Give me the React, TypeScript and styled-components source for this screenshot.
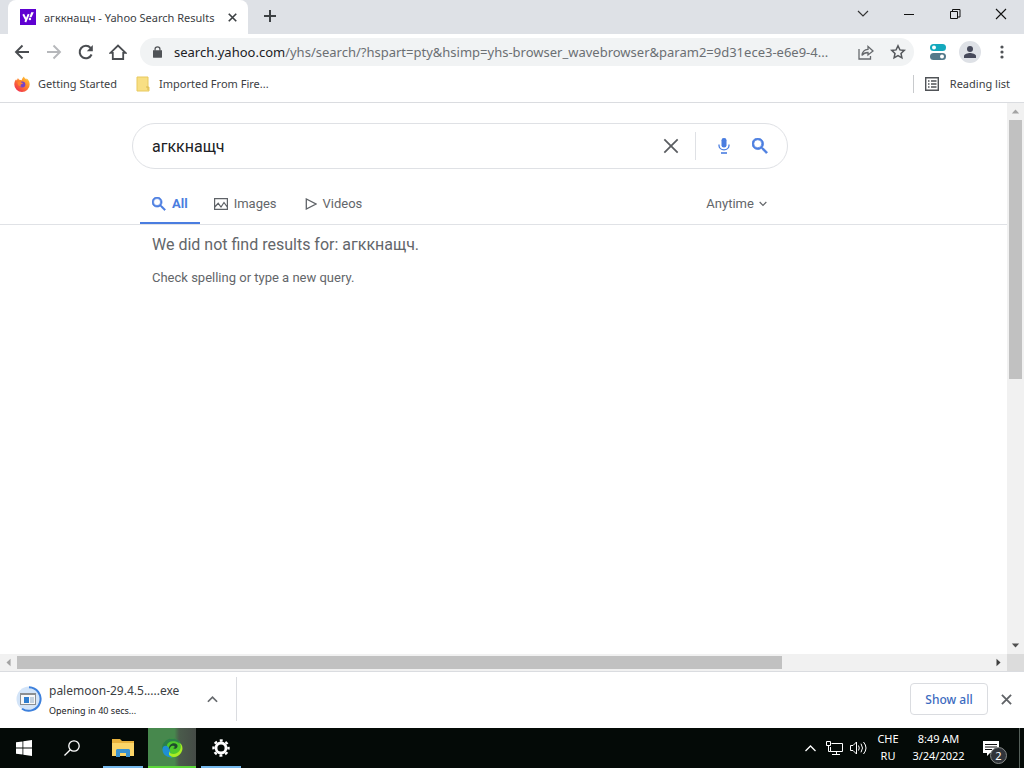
import React from "react";
import styled, { createGlobalStyle } from "styled-components";

const ui = `"Noto Sans", "Open Sans", sans-serif`;
const web = `Roboto, "Liberation Sans", sans-serif`;

const Global = createGlobalStyle`
  *, *::before, *::after { box-sizing: border-box; }
  body { margin: 0; background: #fff; }
  button, input, select { font: inherit; color: inherit; margin: 0; padding: 0; border: 0; background: none; outline: none; }
  a { color: inherit; text-decoration: none; }
  svg { display: block; flex: none; }
`;

const Screen = styled.div`
  display: flex;
  flex-direction: column;
  min-height: 100vh;
  font-family: ${ui};
  color: #3c4043;
`;

const IconButton = styled.button<{ $w?: number; $h?: number }>`
  display: flex;
  flex: none;
  align-items: center;
  justify-content: center;
  width: ${(p) => p.$w ?? 32}px;
  height: ${(p) => p.$h ?? 32}px;
`;

/* Tab strip */
const TabStrip = styled.header`
  display: flex;
  height: 34px;
  padding-left: 8px;
  background: #dee1e6;
`;
const BrowserTab = styled.div`
  display: flex;
  align-items: center;
  width: 240px;
  padding-left: 12px;
  border-radius: 8px 8px 0 0;
  background: #fff;
  font-size: 11px;
`;
const TabTitle = styled.span`
  flex: 1;
  margin-left: 8px;
  white-space: nowrap;
`;
const WindowControls = styled.div`
  display: flex;
  margin-left: auto;
  height: 28px;
`;

/* Toolbar */
const Toolbar = styled.div`
  display: flex;
  align-items: center;
  height: 36px;
  padding: 0 6px;
`;
const Omnibox = styled.div`
  display: flex;
  flex: 1;
  align-items: center;
  min-width: 0;
  height: 28px;
  margin: 0 8px 0 6px;
  padding-left: 13px;
  border-radius: 14px;
  background: #f1f3f4;
`;
const Url = styled.a`
  flex: 1;
  min-width: 0;
  margin-left: 12px;
  overflow: hidden;
  white-space: nowrap;
  font-size: 13px;
  color: #6b6f73;
  b { font-weight: 400; color: #202124; }
`;
const Avatar = styled.span`
  display: flex;
  width: 22px;
  height: 22px;
  align-items: center;
  justify-content: center;
  border-radius: 50%;
  background: #dee1e6;
`;

/* Bookmarks */
const Bookmarks = styled.nav`
  display: flex;
  align-items: center;
  gap: 18px;
  height: 33px;
  padding: 0 14px 5px;
  border-bottom: 1px solid #dadce0;
  font-size: 11px;
`;
const Bookmark = styled.a`
  display: flex;
  align-items: center;
  gap: 8px;
`;
const ReadingList = styled.button`
  display: flex;
  align-items: center;
  gap: 10px;
  height: 18px;
  margin-left: auto;
  padding-left: 10px;
  border-left: 1px solid #c8cacd;
`;

/* Web page and its scrollbars */
const Viewport = styled.div`
  display: grid;
  flex: 1;
  grid-template-columns: 1fr 17px;
  grid-template-rows: 1fr 17px;
`;
const Page = styled.main`
  min-width: 0;
  font-family: ${web};
  color: #63666a;
`;
const Scrollbar = styled.div<{ $vertical?: boolean }>`
  display: flex;
  flex-direction: ${(p) => (p.$vertical ? "column" : "row")};
  align-items: stretch;
  padding: ${(p) => (p.$vertical ? "0 2px" : "2px 0")};
  background: #f1f1f1;
`;
const Track = styled.div`
  display: flex;
  flex: 1;
  flex-direction: inherit;
`;
const Thumb = styled.div<{ $size: string }>`
  flex: 0 0 ${(p) => p.$size};
  background: #c1c1c1;
`;
const Corner = styled.div`
  background: #dcdcdc;
`;
const SearchForm = styled.form`
  display: flex;
  align-items: center;
  width: 656px;
  max-width: 80%;
  height: 46px;
  margin: 20px 0 0 132px;
  padding: 0 9px 0 19px;
  border: 1px solid #dfe1e5;
  border-radius: 23px;
`;
const SearchInput = styled.input`
  flex: 1;
  min-width: 0;
  height: 40px;
  font-size: 16px;
  color: #202124;
`;
const Divider = styled.span`
  width: 1px;
  height: 28px;
  margin: 0 10px 0 8px;
  background: #dfe1e5;
`;
const Filters = styled.nav`
  display: flex;
  height: 56px;
  padding: 14px 0 0 140px;
  border-bottom: 1px solid #e0e2e6;
  font-size: 13px;
`;
const Filter = styled.a<{ $active?: boolean }>`
  display: flex;
  align-items: center;
  gap: 6px;
  padding: 2px ${(p) => (p.$active ? 12 : 14)}px 0;
  border-bottom: 2px solid ${(p) => (p.$active ? "#4a7de0" : "transparent")};
  color: ${(p) => (p.$active ? "#4a7de0" : "inherit")};
  font-weight: ${(p) => (p.$active ? 700 : 400)};
`;
const TimeFilter = styled.label`
  display: flex;
  align-items: center;
  gap: 5px;
  margin-left: 330px;
  select { appearance: none; }
`;
const Results = styled.section`
  padding: 10px 152px;
`;
const Heading = styled.h1`
  margin: 0;
  font-size: 16px;
  font-weight: 400;
  line-height: 20px;
`;
const Hint = styled.p`
  margin: 14px 0 0;
  font-size: 13px;
  line-height: 18px;
`;

/* Downloads */
const DownloadBar = styled.section`
  display: flex;
  align-items: center;
  height: 57px;
  padding: 0 2px 2px 16px;
  border-top: 1px solid #dadce0;
  background: #fff;
`;
const Download = styled.div`
  display: flex;
  align-items: center;
  width: 221px;
  height: 44px;
  padding-right: 8px;
  border-right: 1px solid #dadce0;
`;
const DownloadText = styled.div`
  flex: 1;
  margin-left: 7px;
  padding-top: 4px;
  font-size: 12px;
  line-height: 20px;
  small { display: block; font-size: 9px; line-height: 20px; color: #202124; }
`;
const ShowAll = styled.button`
  width: 78px;
  height: 32px;
  margin: 0 2px 0 auto;
  border: 1px solid #dadce0;
  border-radius: 4px;
  color: #3c6bc0;
  font-size: 12px;
  font-weight: 500;
`;

/* Taskbar */
const Taskbar = styled.footer`
  display: flex;
  height: 40px;
  background: #040a07;
  color: #fff;
  font-size: 11px;
`;
const TaskButton = styled.button<{ $line?: string; $active?: boolean }>`
  display: flex;
  flex: none;
  align-items: center;
  justify-content: center;
  width: ${(p) => (p.$line && !p.$active ? 40 : 48)}px;
  padding-top: 2px;
  border-bottom: 2px solid ${(p) => p.$line ?? "transparent"};
  background: ${(p) => (p.$active ? "linear-gradient(90deg, #47884d 0 55%, #4a5b4b 65%, #454b46)" : "none")};
`;
const Apps = styled.div`
  display: flex;
  ${TaskButton}:nth-child(3) { margin-left: 7px; }
  ${TaskButton}:nth-child(n + 4) { margin-left: 5px; }
`;
const Tray = styled.div`
  display: flex;
  align-items: center;
  margin-left: auto;
`;
const TrayText = styled.button<{ $w: number }>`
  width: ${(p) => p.$w}px;
  padding-bottom: 2px;
  line-height: 17px;
  text-align: center;
  white-space: nowrap;
  span { display: block; }
`;
const Notifications = styled.button`
  position: relative;
  display: flex;
  align-items: center;
  width: 49px;
  height: 40px;
  padding-left: 12px;
  margin-right: 4px;
  border-right: 1px solid #55605a;
`;
const Badge = styled.span`
  position: absolute;
  left: 19px;
  bottom: 4px;
  width: 17px;
  height: 17px;
  border: 1px solid #868a88;
  border-radius: 50%;
  background: #30343a;
  line-height: 15px;
  text-align: center;
`;

type CrossProps = { size: number; stroke?: string; w?: number };
const Cross = ({ size, stroke = "#3c4043", w = 2 }: CrossProps) => (
  <svg width={size} height={size} viewBox="0 0 12 12" stroke={stroke} strokeWidth={w} fill="none">
    <path d="M1 1l10 10M11 1L1 11" />
  </svg>
);
const Search = ({ size, color = "currentColor" }: { size: number; color?: string }) => (
  <svg width={size} height={size} viewBox="3 3 18 18" fill={color}>
    <path stroke={color} strokeWidth=".8" d="M15.5 14h-.79l-.28-.27A6.47 6.47 0 0 0 16 9.5 6.5 6.5 0 1 0 9.5 16c1.61 0 3.09-.59 4.23-1.57l.27.28v.79l5 4.99L20.49 19zm-6 0a4.5 4.5 0 1 1 0-9 4.5 4.5 0 0 1 0 9z" />
  </svg>
);
const Arrow = ({ dir, color }: { dir: number; color: string }) => {
  const upright = dir % 180 === 0;
  return (
    <svg width={upright ? 13 : 17} height={upright ? 17 : 13} viewBox="0 0 16 16">
      <path transform={`rotate(${dir} 8 8)`} d="M3.500 10.500h9L8 5.500z" fill={color} />
    </svg>
  );
};
const Chevron = ({ w, h, up, color = "currentColor", sw = 1 }: { w: number; h: number; up?: boolean; color?: string; sw?: number }) => (
  <svg width={w} height={h} viewBox="0 0 12 8" fill="none" stroke={color} strokeWidth={sw}>
    <path d={up ? "M1 7l5-5 5 5" : "M1 1l5 5 5-5"} />
  </svg>
);

const Logo = () => (
  <svg width="16" height="16" viewBox="0 0 16 16" aria-label="Yahoo">
    <path fill="#5f01d1" d="M0 0h16v16H0z" />
    <path d="M3.2 5.2l2.6 5M8.7 5.2L5.3 13" stroke="#fff" strokeWidth="1.9" fill="none" />
    <path d="M11.2 3.2h2.6l-2.3 5H9.4z" fill="#fff" />
    <circle cx="9.9" cy="10" r="1.2" fill="#fff" />
  </svg>
);
const Firefox = () => (
  <svg width="16" height="16" viewBox="0 0 16 16">
    <defs>
      <linearGradient id="ff" x1="1" y1="0" x2="0.2" y2="1">
        <stop offset="0" stopColor="#ffdf3c" />
        <stop offset=".45" stopColor="#ff8a2a" />
        <stop offset="1" stopColor="#f02b50" />
      </linearGradient>
    </defs>
    <path fill="url(#ff)" d="M10 .5c.2 1.4 1.3 2 2.5 3 .1-.4 0-.9-.1-1.2C14.600 4 15.800 6 15.700 8.500A7.700 7.500 0 0 1 .3 8.500C.3 6.300 1 4.600 2.200 3.300c0 .4.100.8.300 1.200.6-.7 1.100-1.500 1.300-2.300.5.300.9.800 1.200 1.500 1-.1 2 .1 2.700.5C8 2.800 8.800 1.400 10 .5z" />
    <circle cx="8.300" cy="8.600" r="3" fill="#7542c8" />
    <path fill="#ff8430" d="M3.500 6.500c1.500-1.300 3.400-.7 4.300.3L9.200 7c-.5 1-1.700 1-2.400 1.400-.5.500 0 1.700 1 2-1.800.500-4.300-.8-4.300-3.900z" />
  </svg>
);

export default function App() {
  return (
    <Screen>
      <Global />
      <TabStrip>
        <BrowserTab>
          <Logo />
          <TabTitle>агккнащч - Yahoo Search Results</TabTitle>
          <IconButton aria-label="Close tab"><Cross size={9} w={2.2} /></IconButton>
        </BrowserTab>
        <IconButton $w={44} aria-label="New tab">
          <svg width="12" height="12" viewBox="0 0 12 12" stroke="#3c4043" strokeWidth="2"><path d="M6 0v12M0 6h12" /></svg>
        </IconButton>
        <WindowControls>
          <IconButton $w={46} $h={28} aria-label="Search tabs"><Chevron w={12} h={8} color="#333" sw={1.200} /></IconButton>
          <IconButton $w={46} $h={28} aria-label="Minimize">
            <svg width="10" height="10"><path d="M0 5h10v1H0z" fill="#111" /></svg>
          </IconButton>
          <IconButton $w={46} $h={28} aria-label="Restore">
            <svg width="11" height="11" fill="none" stroke="#111"><path d="M.5 2.500h7v7h-7zM2.500 2.500v-2h7.500v7.500H7.500" /></svg>
          </IconButton>
          <IconButton $w={46} $h={28} aria-label="Close"><Cross size={12} stroke="#111" w={1.100} /></IconButton>
        </WindowControls>
      </TabStrip>

      <Toolbar>
        <IconButton aria-label="Back">
          <svg width="16" height="16" viewBox="0 0 16 16" fill="none" stroke="#4a4d51" strokeWidth="1.900"><path d="M15 8H2M8.500 1.500L2 8l6.500 6.500" /></svg>
        </IconButton>
        <IconButton aria-label="Forward">
          <svg width="16" height="16" viewBox="0 0 16 16" fill="none" stroke="#b6b8bb" strokeWidth="1.900"><path d="M1 8h13M7.500 1.500L14 8l-6.500 6.500" /></svg>
        </IconButton>
        <IconButton aria-label="Reload">
          <svg width="16" height="16" viewBox="0 0 16 16" fill="none" stroke="#4a4d51" strokeWidth="2"><path d="M13.600 10.500A6.200 6.200 0 1 1 12.600 4" /><path d="M14.800 1v6.200H8.800z" fill="#4a4d51" stroke="none" /></svg>
        </IconButton>
        <IconButton aria-label="Home">
          <svg width="18" height="16" viewBox="0 0 18 16" fill="none" stroke="#4a4d51" strokeWidth="1.800"><path d="M1.500 8.800L9 1.500l7.500 7.300h-2.300V15H3.800V8.800z" /></svg>
        </IconButton>
        <Omnibox>
          <svg width="9" height="12" viewBox="0 0 10 13"><path d="M0 4.500h10V12a1 1 0 0 1-1 1H1a1 1 0 0 1-1-1z" fill="#505357" /><path d="M2.300 5V3.300a2.700 2.500 0 0 1 5.400 0V5" fill="none" stroke="#505357" strokeWidth="1.400" /></svg>
          <Url href="#"><b>search.yahoo.com</b>/yhs/search/?hspart=pty&amp;hsimp=yhs-browser_wavebrowser&amp;param2=9d31ece3-e6e9-4...</Url>
          <IconButton aria-label="Share">
            <svg width="16" height="15" viewBox="0 0 16 15" fill="none" stroke="#66696d" strokeWidth="1.300"><path d="M1 4v10h11.500v-3M4 10.500c.3-4 2.500-6 6-6.200V1.500L15 6l-5 4V7.500c-2.800 0-4.700 1-6 3z" /></svg>
          </IconButton>
          <IconButton aria-label="Bookmark this page">
            <svg width="16" height="16" viewBox="0 0 16 16" fill="none" stroke="#55585c" strokeWidth="1.500"><path d="M8 1.800l1.900 4.100 4.400.5-3.300 3 .9 4.400L8 11.600l-3.900 2.200.9-4.400-3.300-3 4.400-.5z" /></svg>
          </IconButton>
        </Omnibox>
        <IconButton aria-label="Extension">
          <svg width="16" height="16" viewBox="0 0 16 16"><rect width="16" height="7" rx="3.500" fill="#13a9bd" /><circle cx="4" cy="3.500" r="2" fill="#fff" /><rect y="9" width="16" height="7" rx="3.500" fill="#54798a" /><circle cx="12" cy="12.500" r="2" fill="#fff" /></svg>
        </IconButton>
        <IconButton aria-label="Profile">
          <Avatar><svg width="12" height="12" viewBox="0 0 12 12" fill="#46495a"><circle cx="6" cy="3" r="3" /><path d="M0 12v-2c0-2 4-3 6-3s6 1 6 3v2z" /></svg></Avatar>
        </IconButton>
        <IconButton aria-label="Menu">
          <svg width="4" height="14" viewBox="0 0 4 14" fill="#505357"><circle cx="2" cy="2" r="1.600" /><circle cx="2" cy="7" r="1.600" /><circle cx="2" cy="12" r="1.600" /></svg>
        </IconButton>
      </Toolbar>

      <Bookmarks>
        <Bookmark href="#"><Firefox />Getting Started</Bookmark>
        <Bookmark href="#">
          <svg width="16" height="16" viewBox="0 0 16 16"><path d="M2 1h11v10h1v4H2z" fill="#f8df83" stroke="#e8c95f" /><path d="M11 11h2v3" stroke="#d9b84e" fill="none" /></svg>
          Imported From Fire...
        </Bookmark>
        <ReadingList>
          <svg width="16" height="16" viewBox="0 0 16 16" fill="none" stroke="#505357" strokeWidth="1.400"><path d="M1.700 1.700h12.600v12.600H1.700zM4 5h1.500M7 5h5.500M4 8h1.500M7 8h5.500M4 11h1.500M7 11h5.500" /></svg>
          Reading list
        </ReadingList>
      </Bookmarks>

      <Viewport>
        <Page>
          <SearchForm onSubmit={(e) => e.preventDefault()}>
            <SearchInput aria-label="Search query" defaultValue="агккнащч" />
            <IconButton type="reset" aria-label="Clear"><Cross size={16} stroke="#5a5d61" w={1.300} /></IconButton>
            <Divider />
            <IconButton type="button" $w={36} aria-label="Search by voice">
              <svg width="12" height="16" viewBox="0 0 12 16" fill="none" stroke="#4a7de0"><rect x="3.500" y="0" width="5" height="9.500" rx="2.300" fill="#4a7de0" stroke="none" /><path d="M1 6.500v1a5 4.300 0 0 0 10 0v-1" strokeWidth="1.300" /><path d="M3 15h6" strokeWidth="1.600" /></svg>
            </IconButton>
            <IconButton $w={36} aria-label="Search"><Search size={16} color="#4a7de0" /></IconButton>
          </SearchForm>
          <Filters>
            <Filter href="#" $active><Search size={14} />All</Filter>
            <Filter href="#">
              <svg width="14" height="12" viewBox="0 0 14 12" fill="none" stroke="#5f6368" strokeWidth="1.200"><path d="M.6.6h12.800v10.800H.6zM.8 9l3.400-3.700L7 9l3-4.500L13.200 9" /></svg>
              Images
            </Filter>
            <Filter href="#">
              <svg width="12" height="12" viewBox="0 0 12 12" fill="none" stroke="#5f6368" strokeWidth="1.300"><path d="M1.300 1v10L11 6z" /></svg>
              Videos
            </Filter>
            <TimeFilter>
              <select aria-label="Time range"><option>Anytime</option></select>
              <Chevron w={8} h={6} sw={1.800} />
            </TimeFilter>
          </Filters>
          <Results>
            <Heading>We did not find results for: агккнащч.</Heading>
            <Hint>Check spelling or type a new query.</Hint>
          </Results>
        </Page>
        <Scrollbar $vertical>
          <Arrow dir={0} color="#a3a3a3" />
          <Track><Thumb $size="50%" /></Track>
          <Arrow dir={180} color="#505050" />
        </Scrollbar>
        <Scrollbar>
          <Arrow dir={-90} color="#a3a3a3" />
          <Track><Thumb $size="78.6%" /></Track>
          <Arrow dir={90} color="#404040" />
        </Scrollbar>
        <Corner />
      </Viewport>

      <DownloadBar>
        <Download>
          <svg width="26" height="26" viewBox="0 0 26 26">
            <circle cx="13" cy="13" r="12.500" fill="#d3e4f8" />
            <path d="M13 1.200A11.800 11.800 0 1 1 6 22.700" fill="none" stroke="#3d80dc" strokeWidth="2" />
            <rect x="4.500" y="7.500" width="15" height="11" fill="#f8f8f8" stroke="#8b8e91" />
            <path d="M4 7h16v2H4z" fill="#8b8e91" /><path d="M8 11h5v6H8z" fill="#2f7ed0" /><path d="M14 12h4M14 14h4M14 16h4" stroke="#8fa9c4" />
          </svg>
          <DownloadText>palemoon-29.4.5.....exe<small>Opening in 40 secs...</small></DownloadText>
          <IconButton aria-label="Download options"><Chevron w={11} h={8} up color="#66696d" sw={1.900} /></IconButton>
        </Download>
        <ShowAll>Show all</ShowAll>
        <IconButton aria-label="Close downloads"><Cross size={11} stroke="#606367" w={2} /></IconButton>
      </DownloadBar>

      <Taskbar>
        <Apps>
          <TaskButton aria-label="Start">
            <svg width="16" height="16" viewBox="0 0 16 16" fill="#fff"><path d="M0 2.300l6.500-.9v6.100H0zM7.300 1.300L16 0v7.500H7.300zM0 8.400h6.500v6.200L0 13.700zM7.300 8.400H16V16l-8.700-1.200z" /></svg>
          </TaskButton>
          <TaskButton aria-label="Search">
            <svg width="16" height="16" viewBox="0 0 16 16" fill="none" stroke="#fff" strokeWidth="1.300"><circle cx="10" cy="6" r="5.200" /><path d="M6.300 9.700L.5 15.500" /></svg>
          </TaskButton>
          <TaskButton aria-label="File Explorer" $line="#76b9ed">
            <svg width="22" height="18" viewBox="0 0 22 18"><path d="M0 0h8l2 2h12v15H0z" fill="#e8b23d" /><path d="M0 4h22v13H0z" fill="#fbd568" /><path d="M4 18v-7l1-1h12l1 1v7h-4v-4H8v4z" fill="#3a92d0" /></svg>
          </TaskButton>
          <TaskButton aria-label="Wave Browser" $line="#5bd83a" $active>
            <svg width="22" height="20" viewBox="0 0 22 20">
              <circle cx="11" cy="10" r="9.500" fill="#4fc92c" />
              <path d="M1 11C1 5 5 .5 11 .5c6 0 10 4 10 9C19 5 16 3.300 12 3.300 5.500 3.300 5 9 6 12c-2-.5-3.500-.5-5-1z" fill="#2c7f4a" />
              <path d="M1.500 10C3 7 6 7 8 10c1.500 3 1 6 3 9.500C5 19.500 1 16 1.500 10z" fill="#1f8fd4" />
              <path d="M8 13c1 4 8 4 11-1 1.500-3 1-6-2-8 5 2 5.500 7 3 11-3 4.500-9 5-12 2z" fill="#a8ec25" />
              <path d="M8 12c-1-6 5-8.500 8-5.500 2 3-2 5.500-4 3.500 1.800 0 2.300-1.300 1-2-2.500-1-4 1-5 4z" fill="#1f4a2d" />
            </svg>
          </TaskButton>
          <TaskButton aria-label="Settings" $line="#76b9ed">
            <svg width="18" height="18" viewBox="0 0 18 18" fill="none" stroke="#fff"><circle cx="9" cy="9" r="5" strokeWidth="2.800" /><circle cx="9" cy="9" r="7.500" strokeWidth="2.400" strokeDasharray="2.950 2.940" strokeDashoffset="1.470" /></svg>
          </TaskButton>
        </Apps>
        <Tray>
          <IconButton $w={24} aria-label="Hidden icons"><Chevron w={13} h={8} up sw={1.300} /></IconButton>
          <IconButton $w={24} aria-label="Network">
            <svg width="17" height="15" viewBox="0 0 17 15" fill="none" stroke="#fff"><path d="M5.500 2.500h11v8H4.500V6M10.500 10.500v3M6 13.500h8M.5.500h4v4h-4zM2.500 4.500v6h2" /></svg>
          </IconButton>
          <IconButton $w={24} aria-label="Volume">
            <svg width="17" height="14" viewBox="0 0 17 14" fill="none" stroke="#fff"><path d="M.5 4.500h2.500L6.500 1v12L3 9.500H.5zM8.500 4.500q1.500 2.500 0 5M11 2.700q3 4.300 0 8.600M13.500 1q5 6 0 12" /></svg>
          </IconButton>
          <TrayText $w={36}><span>CHE</span><span>RU</span></TrayText>
          <TrayText $w={65}><span>8:49 AM</span><span>3/24/2022</span></TrayText>
          <Notifications aria-label="2 notifications">
            <svg width="16" height="15" viewBox="0 0 16 15"><path d="M0 0h16v12H7l-3 3v-3H0z" fill="#fff" /><path d="M2 3.500h12M2 6h12M2 8.500h7" stroke="#111" /></svg>
            <Badge>2</Badge>
          </Notifications>
        </Tray>
      </Taskbar>
    </Screen>
  );
}
